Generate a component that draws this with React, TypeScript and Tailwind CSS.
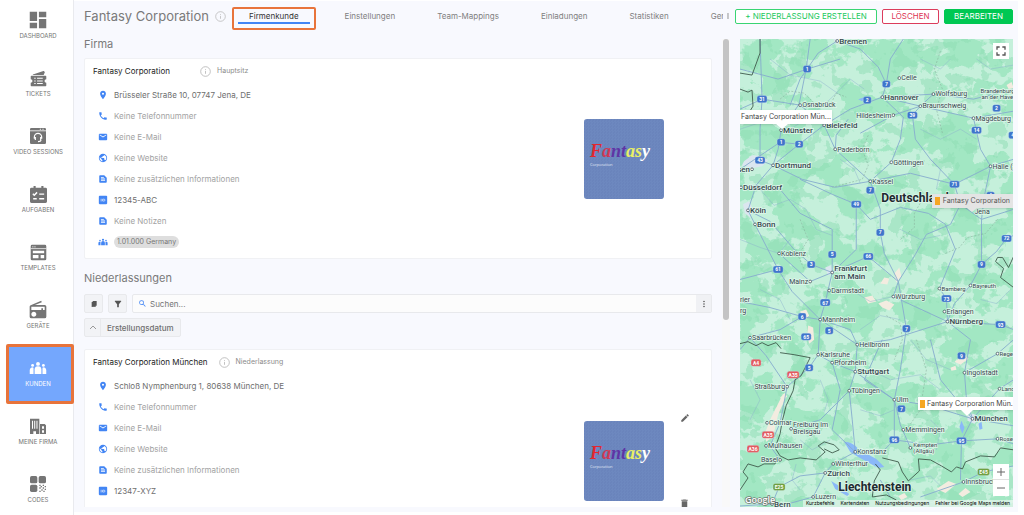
import React from 'react';
import {
    MdDashboard,
    MdDelete,
    MdEdit,
    MdEmail,
    MdFilterAlt,
    MdFullscreen,
    MdMoreVert,
    MdPhone,
    MdPlace,
    MdPublic,
    MdRadio,
    MdSearch,
    MdTextSnippet,
} from 'react-icons/md';

interface IconProps {
    className?: string;
}

const TicketsIcon: React.FC<IconProps> = ({ className }) => (
    <svg viewBox="0 0 24 24" className={className} fill="currentColor">
        <path d="M4 6.500 19 1.500a1 1 0 0 1 1.300.7l.7 2a2.600 2.600 0 0 0-1.500 2.800H4Z" />
        <path fillRule="evenodd" d="M2 8h20a1 1 0 0 1 1 1v4a2.500 2.500 0 0 0 0 5v4a1 1 0 0 1-1 1H2a1 1 0 0 1-1-1v-4a2.500 2.500 0 0 0 0-5V9a1 1 0 0 1 1-1Zm4 3v1.500h2V11Zm4 0v1.500h8V11Zm-4 3.700v1.500h2v-1.500Zm4 0v1.500h8v-1.500Zm-4 3.700v1.500h2v-1.500Zm4 0v1.500h8v-1.500Z" />
    </svg>
);

const VideoIcon: React.FC<IconProps> = ({ className }) => (
    <svg viewBox="0 0 24 24" className={className}>
        <path fill="currentColor" d="M2 0h20a2 2 0 0 1 2 2v20a2 2 0 0 1-2 2H2a2 2 0 0 1-2-2V2a2 2 0 0 1 2-2Z" />
        <path stroke="#fff" strokeWidth="1.200" d="M0 4.200h24M15.500 1v2M19.500 1v2" />
        <path fill="none" stroke="#fff" strokeWidth="1.800" d="M6.500 16v-2.500a5.500 5.500 0 0 1 11 0V16M8 13.500v4.500M16 13.500v4.500M16.500 18c-.3 2-2 2.500-4.500 2.500" />
    </svg>
);

const TasksIcon: React.FC<IconProps> = ({ className }) => (
    <svg viewBox="0 0 24 24" className={className}>
        <path fill="currentColor" d="M2 2.500h3V0h3v2.500h8V0h3v2.500h3a2 2 0 0 1 2 2V22a2 2 0 0 1-2 2H2a2 2 0 0 1-2-2V4.500a2 2 0 0 1 2-2Z" />
        <path fill="none" stroke="#fff" strokeWidth="2" d="m4 11 2 2 4-4M13 11.500h7M13 18h7M4.500 18h5" />
    </svg>
);

const TemplatesIcon: React.FC<IconProps> = ({ className }) => (
    <svg viewBox="0 0 24 24" className={className} fill="currentColor">
        <path fillRule="evenodd" d="M3 1h18a2 2 0 0 1 2 2v18a2 2 0 0 1-2 2H3a2 2 0 0 1-2-2V3a2 2 0 0 1 2-2Zm1 8.500V13h16V9.500Zm0 6V20h8v-4.500Zm11 0V20h5v-4.500Z" />
        <path stroke="#fff" d="M3 4h2M6 4h2M1 6.500h22" />
    </svg>
);

const GroupIcon: React.FC<IconProps> = ({ className }) => (
    <svg viewBox="0 0 24 24" className={className} fill="currentColor">
        <circle cx="12" cy="6.500" r="2.600" />
        <circle cx="4.800" cy="8.500" r="1.900" />
        <circle cx="19.200" cy="8.500" r="1.900" />
        <path d="M7.500 20v-6a4.500 4.500 0 0 1 9 0v6Z" />
        <path d="M1 20v-5.500a3.500 3.500 0 0 1 5-3V20ZM23 20v-5.500a3.500 3.500 0 0 0-5-3V20Z" />
    </svg>
);

const CompanyIcon: React.FC<IconProps> = ({ className }) => (
    <svg viewBox="0 0 24 24" className={className} fill="currentColor">
        <path fillRule="evenodd" d="M0 1h14v23H9v-4H5v4H0Zm3 3v12h1.500V4Zm3.300 0v12h1.500V4Zm3.400 0v12h1.500V4Z" />
        <path fillRule="evenodd" d="M15 9h7l2 2v13h-9Zm3 3.500V16h3v-3.500Zm0 6V22h3v-3.500Z" />
    </svg>
);

const CodesIcon: React.FC<IconProps> = ({ className }) => (
    <svg viewBox="0 0 24 24" className={className} fill="currentColor">
        <rect width="11" height="11" rx="2.500" />
        <rect x="13" width="11" height="11" rx="2.500" />
        <rect y="13" width="11" height="11" rx="2.500" />
        <path d="M14 13h2v2h2v2h-2v2h-2v-2h2v-2h-2ZM19 13h2v2h-2ZM22 15h2v2h-2ZM19 17h2v2h-2ZM22 19h2v2h-2ZM17 20h2v2h-2ZM14 22h2v2h-2ZM20 22h2v2h-2Z" />
    </svg>
);

const IdIcon: React.FC<IconProps> = ({ className }) => (
    <svg viewBox="0 0 24 24" className={className}>
        <rect x="2" y="2" width="20" height="20" rx="2" fill="currentColor" />
        <path fill="none" stroke="#fff" strokeWidth="1.500" d="M7.500 9v6.500M11 10v4.500h3.500a2.200 2.200 0 0 0 0-4.500Z" />
    </svg>
);

const InfoIcon: React.FC<IconProps> = ({ className }) => (
    <svg viewBox="0 0 24 24" className={className} fill="none" stroke="currentColor" strokeWidth="1.800">
        <circle cx="12" cy="12" r="10.500" />
        <path d="M12 11v6M12 7v2" />
    </svg>
);

const CopyIcon: React.FC<IconProps> = ({ className }) => (
    <svg viewBox="0 0 24 24" className={className} fill="currentColor">
        <path d="M9 3h11v14H9ZM5 6h2v13h10v2H5Z" />
        <path d="M6 5h11v14H6Z" />
    </svg>
);

const navItems = [
    { label: 'DASHBOARD', Icon: MdDashboard, size: 'size-[22px]' },
    { label: 'TICKETS', Icon: TicketsIcon, size: 'size-[17px]' },
    { label: 'VIDEO SESSIONS', Icon: VideoIcon, size: 'size-4' },
    { label: 'AUFGABEN', Icon: TasksIcon, size: 'size-[17px]' },
    { label: 'TEMPLATES', Icon: TemplatesIcon, size: 'size-[17px]' },
    { label: 'GERÄTE', Icon: MdRadio, size: 'size-5' },
    { label: 'KUNDEN', Icon: GroupIcon, size: 'size-[18px]', active: true },
    { label: 'MEINE FIRMA', Icon: CompanyIcon, size: 'size-4' },
    { label: 'CODES', Icon: CodesIcon, size: 'size-4' },
];

const Sidebar = () => (
    <nav className="w-[74px] shrink-0 border-r border-[#e9eaee] bg-white">
        <ul className="flex flex-col gap-[6px]">
            {navItems.map(({ label, Icon, size, active }) => (
                <li key={label} className="relative h-[52px] pl-[3px]">
                    {active && <span className="absolute -inset-y-1 left-[6px] -right-px rounded-xs border-[3px] border-[#e8743b] bg-[#74a7fd]" />}
                    <a
                        href="#"
                        className={`relative flex h-full flex-col items-center pt-[9px] text-[6px] leading-[10px] whitespace-nowrap ${active ? 'text-white' : 'text-[#757575]'}`}
                    >
                        <span className="flex h-[22px] items-center">
                            <Icon className={size} />
                        </span>
                        {label}
                    </a>
                </li>
            ))}
        </ul>
    </nav>
);

const tabs = ['Firmenkunde', 'Einstellungen', 'Team-Mappings', 'Einladungen', 'Statistiken', 'Geräte'];

const Header = () => (
    <header className="flex h-[30px] items-center pl-[10px]">
        <h1 className="text-[13px] leading-5 whitespace-nowrap text-[#7a7a7a]">Fantasy Corporation</h1>
        <InfoIcon className="ml-[6px] size-[11px] shrink-0 text-[#bcbcbc]" />
        <div className="ml-[6px] flex min-w-0 flex-1 gap-4 self-start overflow-hidden pt-[6px] text-[8px] text-[#808080]">
            {tabs.map((tab, i) => (
                <div
                    key={tab}
                    className={i === 0 ? 'shrink-0 rounded-xs border-2 border-[#e8743b] px-1 pt-px pb-1' : 'shrink-0 border-y-2 border-transparent px-[2px] pt-px pb-1'}
                >
                    <button
                        className={`block border-b-2 px-[11px] leading-3 ${i === 0 ? 'border-[#4285f4] text-[#333]' : 'border-transparent'}`}
                    >
                        {tab}
                    </button>
                </div>
            ))}
        </div>
        <button aria-label="Mehr" className="flex w-[10px] shrink-0 justify-center text-[#666]">
            <MdMoreVert className="size-2" />
        </button>
        <div className="flex shrink-0 gap-[5px] pr-[5px] pl-[2px] text-[8px] leading-[13px] whitespace-nowrap">
            <button className="w-[142px] rounded-xs border border-[#39d573] bg-white text-[#22c960]">+ NIEDERLASSUNG ERSTELLEN</button>
            <button className="w-[57px] rounded-xs border border-[#dc3c5c] bg-white text-[#dc3555]">LÖSCHEN</button>
            <button className="w-[69px] rounded-xs border border-[#00c853] bg-[#00c853] text-white">BEARBEITEN</button>
        </div>
    </header>
);

interface Company {
    name: string;
    kind: string;
    address: string;
    number: string;
    category?: string;
    editable?: boolean;
}

const CompanyLogo = () => (
    <svg viewBox="0 0 80 80" className="size-20 rounded-[3px]">
        <defs>
            <pattern id="weave" width="3" height="3" patternUnits="userSpaceOnUse">
                <path d="M0 1h1M2 2h1" stroke="#5f7bb5" strokeWidth="0.600" />
            </pattern>
        </defs>
        <rect width="80" height="80" fill="#6d88bf" />
        <rect width="80" height="80" fill="url(#weave)" />
        <text x="6" y="38" fontFamily="'Liberation Serif', cursive" fontStyle="italic" fontWeight="700" fontSize="18">
            <tspan fill="#e2272f">F</tspan>
            <tspan fill="#cf3856">a</tspan>
            <tspan fill="#5f35a5">nt</tspan>
            <tspan fill="#e9ef65">as</tspan>
            <tspan fill="#fff">y</tspan>
        </text>
        <text x="6" y="47" fontFamily="'Open Sans', sans-serif" fontSize="4" fill="#e4eaf7">
            Corporation
        </text>
    </svg>
);

const CompanyCard: React.FC<{ company: Company }> = ({ company }) => {
    const rows = [
        { Icon: MdPlace, text: company.address, filled: true },
        { Icon: MdPhone, text: 'Keine Telefonnummer' },
        { Icon: MdEmail, text: 'Keine E-Mail' },
        { Icon: MdPublic, text: 'Keine Website' },
        { Icon: MdTextSnippet, text: 'Keine zusätzlichen Informationen' },
        { Icon: IdIcon, text: company.number, filled: true },
    ];

    return (
        <article className={`flex items-center rounded-xs border border-[#f0f1f4] bg-white ${company.editable ? 'min-h-[224px]' : ''}`}>
            <div className="flex-1 self-start px-2 pt-[6px] pb-[6px]">
                <div className="flex h-3 items-center gap-[11px]">
                    <h3 className="min-w-24 text-[8px] text-[#222]">{company.name}</h3>
                    <span className="flex items-center gap-[6px] text-[7px] text-[#8c8c8c]">
                        <InfoIcon className="size-[11px] text-[#b5b5b5]" />
                        {company.kind}
                    </span>
                </div>
                <ul className="mt-[7px] pl-[5px] text-[8px]">
                    {rows.map(({ Icon, text, filled }) => (
                        <li key={text} className={`flex h-[21px] items-center gap-[6px] ${filled ? 'text-[#6e6e6e]' : 'text-[#a2a2a2]'}`}>
                            <Icon className="size-[10px] text-[#4285f4]" />
                            {text}
                        </li>
                    ))}
                    {company.category && (
                        <>
                            <li className="flex h-[21px] items-center gap-[6px] text-[#a2a2a2]">
                                <MdTextSnippet className="size-[10px] text-[#4285f4]" />
                                Keine Notizen
                            </li>
                            <li className="flex h-[21px] items-center gap-[6px]">
                                <GroupIcon className="size-[10px] text-[#4285f4]" />
                                <span className="rounded-full bg-[#dedede] px-[3px] text-[7px] leading-3 text-[#777]">{company.category}</span>
                            </li>
                        </>
                    )}
                </ul>
            </div>
            <CompanyLogo />
            <div className="flex h-24 w-[47px] flex-col items-center justify-between pr-[6px] text-[#666]">
                {company.editable && (
                    <>
                        <button aria-label="Bearbeiten">
                            <MdEdit className="size-[10px]" />
                        </button>
                        <button aria-label="Löschen">
                            <MdDelete className="size-[11px]" />
                        </button>
                    </>
                )}
            </div>
        </article>
    );
};

const CompanyPanel = () => (
    <div className="flex min-h-0 min-w-0 flex-1">
        <div className="min-w-0 flex-1 overflow-hidden px-[10px]">
            <h2 className="mb-[9px] text-[11px] leading-[10px] text-[#7a7a7a]">Firma</h2>
            <CompanyCard
                company={{
                    name: 'Fantasy Corporation',
                    kind: 'Hauptsitz',
                    address: 'Brüsseler Straße 10, 07747 Jena, DE',
                    number: '12345-ABC',
                    category: '1.01.000 Germany',
                }}
            />
            <h2 className="mt-3 mb-[9px] text-[11px] leading-[14px] text-[#7a7a7a]">Niederlassungen</h2>
            <div className="flex h-[19px] gap-[5px]">
                <button aria-label="Kopieren" className="flex w-[19px] items-center justify-center rounded-xs border border-[#e8e9ec] bg-[#f2f3f6] text-[#555]">
                    <CopyIcon className="size-2" />
                </button>
                <button aria-label="Filtern" className="flex w-[19px] items-center justify-center rounded-xs border border-[#e8e9ec] bg-[#f2f3f6] text-[#555]">
                    <MdFilterAlt className="size-[10px]" />
                </button>
                <div className="flex flex-1 items-center rounded-xs border border-[#e8e9ec] bg-[#fcfcfc]">
                    <label htmlFor="search" className="pl-[5px] text-[#4285f4]">
                        <MdSearch className="size-[9px]" />
                    </label>
                    <input
                        id="search"
                        aria-label="Suchen"
                        placeholder="Suchen..."
                        className="min-w-0 flex-1 bg-transparent pl-[3px] text-[8px] outline-none placeholder:text-[#757575]"
                    />
                    <button aria-label="Optionen" className="flex h-full w-[15px] items-center justify-center bg-[#f0f1f4] text-[#555]">
                        <MdMoreVert className="size-[10px]" />
                    </button>
                </div>
            </div>
            <button className="mt-[5px] mb-3 flex h-[19px] items-center rounded-xs border border-[#e8e9ec] bg-[#f2f3f6] text-[8px] font-medium text-[#707070]">
                <span className="flex h-full w-4 items-center justify-center border-r border-[#e8e9ec]">
                    <svg viewBox="0 0 8 5" className="h-[5px] w-2" fill="none" stroke="#999">
                        <path d="m1 4 3-3 3 3" />
                    </svg>
                </span>
                <span className="px-[6px]">Erstellungsdatum</span>
            </button>
            <CompanyCard
                company={{
                    name: 'Fantasy Corporation München',
                    kind: 'Niederlassung',
                    address: 'Schloß Nymphenburg 1, 80638 München, DE',
                    number: '12347-XYZ',
                    editable: true,
                }}
            />
        </div>
        <div className="w-2 bg-[#f9f9f9] px-px">
            <div className="h-3/5 rounded-full bg-[#c4c4c4]" />
        </div>
    </div>
);

type Side = 'l' | 'r';
type City = [name: string, x: number, y: number, size: number, side?: Side];

const cities: City[] = [
    ['Bremen', 97, 2, 8], ['Celle', 159, 39, 7], ['Hannover', 142, 58, 8], ['Wolfsburg', 193, 55, 7],
    ['Braunschweig', 180, 67, 7], ['Osnabrück', 60, 66, 7], ['Hildesheim', 153, 76, 7, 'l'], ['Magdeburg', 233, 79, 7],
    ['Bielefeld', 84, 86, 8], ['Münster', 41, 91, 8], ['Paderborn', 95, 110, 7], ['Göttingen', 151, 123, 7],
    ['Dortmund', 33, 126, 8], ['Essen', 12, 130, 8, 'l'], ['Halle (Saale)', 250, 127, 7], ['Kassel', 130, 142, 7],
    ['Düsseldorf', 1, 148, 8], ['Köln', 8, 171, 8], ['Bonn', 15, 185, 8], ['Koblenz', 39, 214, 7],
    ['Mainz', 70, 242, 7, 'l'], ['Darmstadt', 89, 251, 7], ['Würzburg', 153, 257, 7], ['Bamberg', 199, 249, 6],
    ['Bayreuth', 230, 246, 6], ['Erlangen', 204, 272, 7], ['Nürnberg', 207, 282, 8], ['Mannheim', 80, 280, 7],
    ['Saarbrücken', 10, 298, 7], ['Heilbronn', 117, 305, 7], ['Karlsruhe', 78, 315, 7], ['Pforzheim', 92, 323, 7],
    ['Stuttgart', 115, 332, 8], ['Straßburg', 47, 347, 7, 'l'], ['Tübingen', 109, 351, 7], ['Ulm', 154, 360, 7],
    ['Ingolstadt', 224, 333, 7], ['Regensburg', 257, 314, 6], ['Landshut', 259, 349, 6], ['München', 232, 379, 8],
    ['Colmar', 27, 383, 7], ['Memmingen', 163, 390, 7], ['Rosenheim', 257, 399, 6], ['Mulhausen', 26, 406, 7],
    ['Basel', 40, 420, 7, 'l'], ['Konstanz', 115, 412, 7], ['Winterthur', 93, 424, 7], ['Zürich', 85, 433, 8],
    ['Innsbruck', 223, 442, 7], ['Luzern', 73, 457, 7], ['Bern', 32, 464, 8],
];

// Labels that sit beside their dot on two lines, or have none
const mapTexts: [text: string, x: number, y: number, size: number][] = [
    ['Brandenburg', 240, 52, 6], ['an der Havel', 241, 58, 6], ['Frankfurt', 94, 229, 8], ['am Main', 94, 237, 8],
    ['Freiburg im', 53, 385, 7], ['Breisgau', 53, 392, 7], ['Kempten', 173, 405, 6], ['(Allgäu)', 173, 411, 6],
    ['Jena', 234, 172, 7], ['rier', 0, 260, 7], ['rg', 0, 271, 7],
];

const shields: [text: string, x: number, y: number][] = [
    ['1', 67, 30], ['7', 146, 45], ['31', 22, 60], ['2', 127, 61], ['39', 172, 76], ['2', 256, 69], ['14', 236, 91],
    ['4', 272, 96], ['1', 41, 103], ['2', 59, 105], ['43', 20, 121], ['71', 214, 145], ['7', 130, 151], ['49', 116, 165],
    ['4', 250, 156], ['7', 140, 193], ['72', 266, 199], ['5', 92, 215], ['3', 71, 225], ['66', 128, 217], ['61', 38, 230],
    ['9', 241, 225], ['67', 85, 263], ['73', 206, 259], ['6', 62, 277], ['5', 89, 291], ['7', 166, 289], ['93', 260, 285],
    ['65', 66, 297], ['5', 69, 328], ['9', 221, 316], ['7', 161, 369], ['96', 154, 400], ['95', 221, 401],
    ['A4', 16, 323], ['A35', 53, 335], ['A35', 28, 395], ['A36', 13, 409], ['E25', 39, 447], ['E45', 243, 432],
];

const roads = [
    'M70 0 66 30 59 65 41 91 38 110 33 126 16 146 8 171 15 185 38 230 52 252 80 280',
    'M97 2 78 14 60 40 50 66 M97 2 120 10 138 28 146 45 142 58 163 78 160 100 151 123 130 142 140 170 140 193 144 214 158 242 166 289 160 330 154 360 160 385 170 408',
    'M0 70 22 60 60 66 84 86 110 70 142 58 180 67 233 79 273 72',
    'M22 60 20 90 20 121 33 126 59 105 84 86 95 110 130 142',
    'M33 126 62 140 95 148 130 142 170 134 214 145 250 127 273 120',
    'M15 146 40 150 60 174 92 190 92 215 92 233 85 263 80 280 78 315 69 328 47 347 40 383 30 406 40 420',
    'M8 171 30 182 54 210 71 225 92 233 128 217 158 242 153 257 207 282 230 300 224 333 226 360 232 379 221 401 220 440',
    'M39 214 70 242 92 233 116 210 116 165 92 155 60 140',
    'M80 280 117 305 150 300 207 282 260 285 273 290',
    'M10 298 40 290 62 277 80 280 110 290 117 305 115 332 154 360 190 366 232 379 273 386',
    'M78 315 92 323 115 332 109 351 112 380 115 412 93 424 85 433 73 457 40 466',
    'M233 79 240 110 250 127 244 156 241 180 241 225 230 246 214 264 207 282',
    'M180 67 172 76 175 100 190 120 214 145 220 165 210 185 186 195 175 215 158 242',
    'M199 249 206 259 207 282 M199 249 215 210 205 185 188 174 160 168 130 180 116 165',
    'M163 0 150 20 146 45 M142 58 193 55 233 60 273 50',
    'M220 165 241 180 273 170 M241 225 256 212 266 199 273 196 M250 156 273 160',
    'M0 240 38 230 M0 262 30 268 62 277 M0 310 10 298 26 316 47 347',
    'M154 360 154 400 140 414 M154 400 190 405 221 401 257 399 273 404',
    'M224 333 257 314 273 300 M232 379 259 349 273 340',
    'M39 447 60 436 85 433 M39 447 32 464 0 466 M140 440 150 457 M180 457 223 442 243 432 273 426',
    'M20 0 22 60 M0 130 40 103 59 105 M0 30 38 40 67 30 100 20 M108 80 96 96 95 110 M193 55 180 67 153 76 120 94',
    'M190 300 200 340 232 379 M142 300 124 340 154 360 M51 389 80 380 109 351 M92 323 100 350 92 390 115 412',
];

const borders = [
    'M20 0 20 14 12 36 0 34 M0 50 8 53 12 51 13 67 8 75 0 74',
    'M273 217 268 228 262 218 257 218 255 222 263 229 260 238 273 248',
    'M0 304 8 302 16 306 22 303 28 306 36 303 41 309 M40 313 54 315 70 318 61 336 55 340 53 351 46 366 42 382 40 394 35 408 40 416 48 420 60 418 76 420 85 412 78 406 84 402 94 405 99 410 92 413 84 409',
    'M0 450 8 438 3 432 8 424 18 427 24 424 35 424 37 416',
    'M142 418 158 422 162 432 168 441 179 431 178 419 190 420 201 426 211 432 216 427 222 429 225 422 240 416 254 417 260 408 273 410',
    'M135 424 140 430 134 441 132 457 146 455 156 460',
];

const halo = { stroke: '#dff7ea', strokeWidth: 1.5, paintOrder: 'stroke' as const, fill: '#37474f' };

const MapCanvas = () => (
    <svg viewBox="0 0 273 467" preserveAspectRatio="xMinYMin slice" className="absolute inset-0 size-full" fontFamily="Roboto, sans-serif">
        <defs>
            <filter id="forest" x="0" y="0" width="100%" height="100%" colorInterpolationFilters="sRGB">
                <feTurbulence type="fractalNoise" baseFrequency="0.03 0.035" numOctaves="5" seed="11" />
                <feColorMatrix values="0 0 0 0 0.635  0 0 0 0 0.905  0 0 0 0 0.765  0 30 0 0 -14.700" />
            </filter>
            <filter id="shade" x="0" y="0" width="100%" height="100%" colorInterpolationFilters="sRGB">
                <feTurbulence type="fractalNoise" baseFrequency="0.060" numOctaves="4" seed="5" />
                <feColorMatrix values="0 0 0 0 0.560  0 0 0 0 0.870  0 0 0 0 0.710  0 24 0 0 -13.600" />
            </filter>
        </defs>
        <rect width="273" height="467" fill="#c5f0db" />
        <rect width="273" height="467" filter="url(#forest)" />
        <rect width="273" height="467" filter="url(#shade)" opacity="0.500" />
        <g fill="#f3ece0">
            <path d="M140 244l4-6 5 1-2 6ZM154 234l5-6 2 9-5 6ZM124 258l8-2 4 6-8 2ZM138 264l8-3 8 4-5 6-7-3ZM60 272l6-2 3 6-5 5ZM68 286l5 2 1 12-5 4-2-10ZM214 322l10-7 4 4-8 6ZM210 328l5-2 1 4-5 1ZM31 378l6-12 6-12 3 3-8 18-5 22-7 5-1-9ZM40 358l5-5 2 4-5 4ZM196 449l12-8 8 3-11 9ZM218 454l7-6 5 4-8 5ZM266 46l5-3 2 6-5 1ZM252 449l8-5 4 3-8 6ZM158 456l6-3 3 4-6 3Z" />
        </g>
        <g fill="#dbe6ef">
            <path d="M4 122l8-6 10 1 6 4-6 6-10 2-10-3ZM3 165l6-3 4 8-3 8-5-4ZM85 228l5-2 3 6-5 4ZM227 376l6-2 6 4-5 6-7-3ZM93 0l5-1 4 4-6 2Z" />
        </g>
        <path d="M104 402q8 0 14 7l18 10 8 8-6 1-20-11-8-5ZM219 387l2-6 3 7-2 6ZM238 384l3-2 1 7-3 1ZM91 441l8 5 10 8-2 2-12-7ZM118 60l7-2-3 4Z" fill="#8ab8f8" />
        <g fill="none" stroke="#86abce" strokeLinejoin="round">
            {roads.map((d) => (
                <path key={d} d={d} strokeWidth="0.900" />
            ))}
            <path
                strokeWidth="0.500"
                opacity="0.800"
                d="M0 90 30 80 50 90 66 80 90 60 110 40 124 50 M30 20 50 36 80 42 100 56 M100 120 114 130 120 144 M180 90 200 100 220 90 236 100 M190 120 200 130 196 150 M20 150 34 166 50 160 66 170 76 190 92 196 M0 200 20 208 39 214 50 200 M20 250 40 260 50 280 M110 250 130 262 153 257 M120 290 140 276 160 280 M170 300 186 320 210 330 M130 330 150 340 180 335 200 350 M80 340 88 360 84 372 M120 370 140 376 154 370 M190 380 200 390 196 410 M60 400 72 410 90 400 M10 340 20 360 10 380 M60 450 52 440 56 424 M170 440 190 436 200 446 M160 190 180 200 200 196 M240 260 256 264 270 250 M236 20 250 30 273 26 M180 20 200 30 210 20"
            />
        </g>
        <g fill="none" stroke="#82a794" strokeWidth="0.500" strokeDasharray="2 1.500">
            <path d="M40 60l10-8 14 2 10 10 16 2 6-12 10 4M200 12l-6 18 8 20-6 20 6 24M128 96l-6 14 6 16-6 14-30 8M60 180l8 20-10 16 6 14M160 200l14-12 0-14 8-14M205 214l14-6 8-10 18-4 12-14M146 276l14 8 2 16-8 20M176 300l10 30-6 40-14 20" />
        </g>
        <g fill="none" stroke="#3f5a4c" strokeWidth="0.900" strokeLinejoin="round">
            {borders.map((d) => (
                <path key={d} d={d} />
            ))}
        </g>
        {shields.map(([text, x, y]) => {
            const color = text[0] === 'A' ? '#e25a5f' : text[0] === 'E' ? '#6ea03f' : '#3f75cb';
            const width = text.length * 2 + 6;
            return (
                <g key={`${text}-${x}`}>
                    <rect x={x - width / 2} y={y - 3.5} width={width} height="7" rx="2" fill={color} stroke="#d8e8f8" strokeWidth="0.300" />
                    <text x={x} y={y + 2} textAnchor="middle" fontSize="5" fontWeight="700" fill="#fff">
                        {text}
                    </text>
                </g>
            );
        })}
        {cities.map(([name, x, y, size, side]) => (
            <g key={name}>
                <circle cx={x} cy={y} r="1.400" fill="#fff" stroke="#46545a" strokeWidth="0.800" />
                <text x={side === 'l' ? x - 2 : x + 2} y={y + size / 3} textAnchor={side === 'l' ? 'end' : 'start'} fontSize={size} fontWeight={size > 7 ? 500 : 400} {...halo}>
                    {name}
                </text>
            </g>
        ))}
        {[[92, 233], [51, 389], [170, 408]].map(([x, y]) => (
            <circle key={x} cx={x} cy={y} r="1.400" fill="#fff" stroke="#46545a" strokeWidth="0.800" />
        ))}
        {mapTexts.map(([text, x, y, size]) => (
            <text key={text} x={x} y={y + size / 3} fontSize={size} fontWeight={size > 7 ? 500 : 400} {...halo}>
                {text}
            </text>
        ))}
        <g fontSize="12" fontWeight="700" stroke="#dff7ea" strokeWidth="1.500" paintOrder="stroke" fill="#1d2a30">
            <text x="141" y="163">Deutschland</text>
            <text x="98" y="451">Liechtenstein</text>
        </g>
        <text x="5" y="463" fontFamily="'Open Sans', sans-serif" fontSize="9" fontWeight="600" fill="#fff" stroke="#707a75" strokeWidth="1.500" paintOrder="stroke">
            Google
        </text>
    </svg>
);

const MapPanel = () => (
    <section aria-label="Karte" className="relative h-full w-[273px] shrink-0 overflow-hidden">
        <MapCanvas />
        <div className="absolute top-[71px] left-0 bg-white px-px text-[7px] leading-[14px] text-[#444] shadow">
            Fantasy Corporation Mün...
            <span className="absolute top-full left-9 border-x-[6px] border-t-[5px] border-x-transparent border-t-white" />
        </div>
        <div className="absolute top-[155px] right-0 flex items-center gap-[3px] bg-[#e4e4e4] px-[3px] text-[7px] leading-[14px] whitespace-nowrap text-[#555] shadow">
            <span className="h-2 w-[5px] bg-[#f5a623]" />
            Fantasy Corporation
            <span className="absolute top-full left-[35px] border-x-[5px] border-t-[4px] border-x-transparent border-t-[#e4e4e4]" />
        </div>
        <div className="absolute top-[358px] left-[178px] flex items-center gap-[2px] bg-white px-[2px] text-[7px] leading-[13px] whitespace-nowrap text-[#444] shadow">
            <span className="h-2 w-[5px] bg-[#f5a623]" />
            Fantasy Corporation Mün...
            <span className="absolute top-full left-[43px] border-x-[6px] border-t-[6px] border-x-transparent border-t-white" />
        </div>
        <button aria-label="Vollbild" className="absolute top-1 right-1 flex size-4 items-center justify-center bg-white text-[#555]">
            <MdFullscreen className="size-4" />
        </button>
        <div className="absolute right-1 bottom-[11px] flex w-4 flex-col divide-y divide-[#e0e0e0] bg-white text-[#666]">
            <button aria-label="Vergrößern" className="flex h-4 items-center justify-center">
                <svg viewBox="0 0 8 8" className="size-2" stroke="currentColor"><path d="M0 4h8M4 0v8" /></svg>
            </button>
            <button aria-label="Verkleinern" className="flex h-4 items-center justify-center">
                <svg viewBox="0 0 8 8" className="size-2" stroke="currentColor"><path d="M0 4h8" /></svg>
            </button>
        </div>
        <div className="absolute right-0 bottom-0 flex gap-[6px] bg-[#e7f5ee]/70 px-[3px] font-[Inter,sans-serif] text-[5px] leading-[7px] whitespace-nowrap text-black">
            <a href="#">Kurzbefehle</a>
            <span>Kartendaten</span>
            <a href="#">Nutzungsbedingungen</a>
            <a href="#">Fehler bei Google Maps melden</a>
        </div>
    </section>
);

export default function App() {
    return (
        <div className="flex h-screen overflow-hidden bg-white font-[Inter,sans-serif]">
            <Sidebar />
            <main className="mt-px mr-[6px] mb-[3px] flex min-w-0 flex-1 flex-col bg-[#f8f9fe]">
                <Header />
                <div className="flex min-h-0 flex-1 gap-[10px] pt-2 pr-[5px] pb-[5px]">
                    <CompanyPanel />
                    <MapPanel />
                </div>
            </main>
        </div>
    );
}
